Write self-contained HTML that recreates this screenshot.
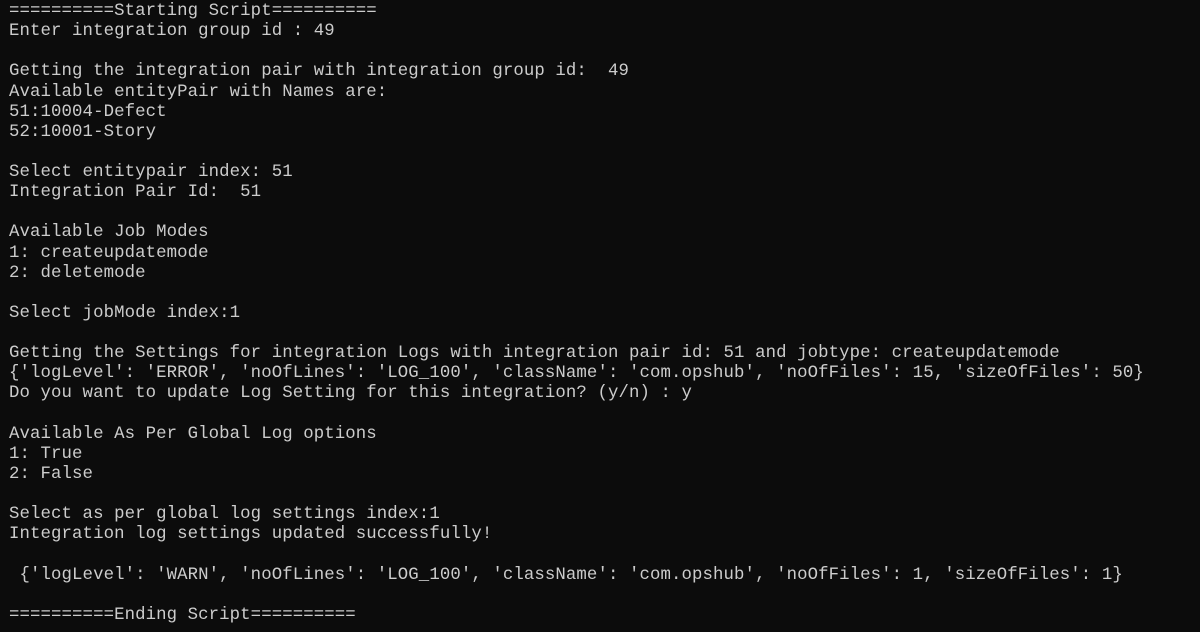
<!DOCTYPE html>
<html><head><meta charset="utf-8"><style>
html,body{margin:0;padding:0;background:#0c0c0c;width:1200px;height:632px;overflow:hidden}
pre{margin:0;padding:2px 0 0 9px;font-family:"Liberation Mono",monospace;font-size:17.35px;letter-spacing:0.1px;line-height:20.13px;color:#cccccc;white-space:pre}
</style></head><body><pre>==========Starting Script==========
Enter integration group id : 49

Getting the integration pair with integration group id:  49
Available entityPair with Names are:
51:10004-Defect
52:10001-Story

Select entitypair index: 51
Integration Pair Id:  51

Available Job Modes
1: createupdatemode
2: deletemode

Select jobMode index:1

Getting the Settings for integration Logs with integration pair id: 51 and jobtype: createupdatemode
{'logLevel': 'ERROR', 'noOfLines': 'LOG_100', 'className': 'com.opshub', 'noOfFiles': 15, 'sizeOfFiles': 50}
Do you want to update Log Setting for this integration? (y/n) : y

Available As Per Global Log options
1: True
2: False

Select as per global log settings index:1
Integration log settings updated successfully!

 {'logLevel': 'WARN', 'noOfLines': 'LOG_100', 'className': 'com.opshub', 'noOfFiles': 1, 'sizeOfFiles': 1}

==========Ending Script==========</pre></body></html>
